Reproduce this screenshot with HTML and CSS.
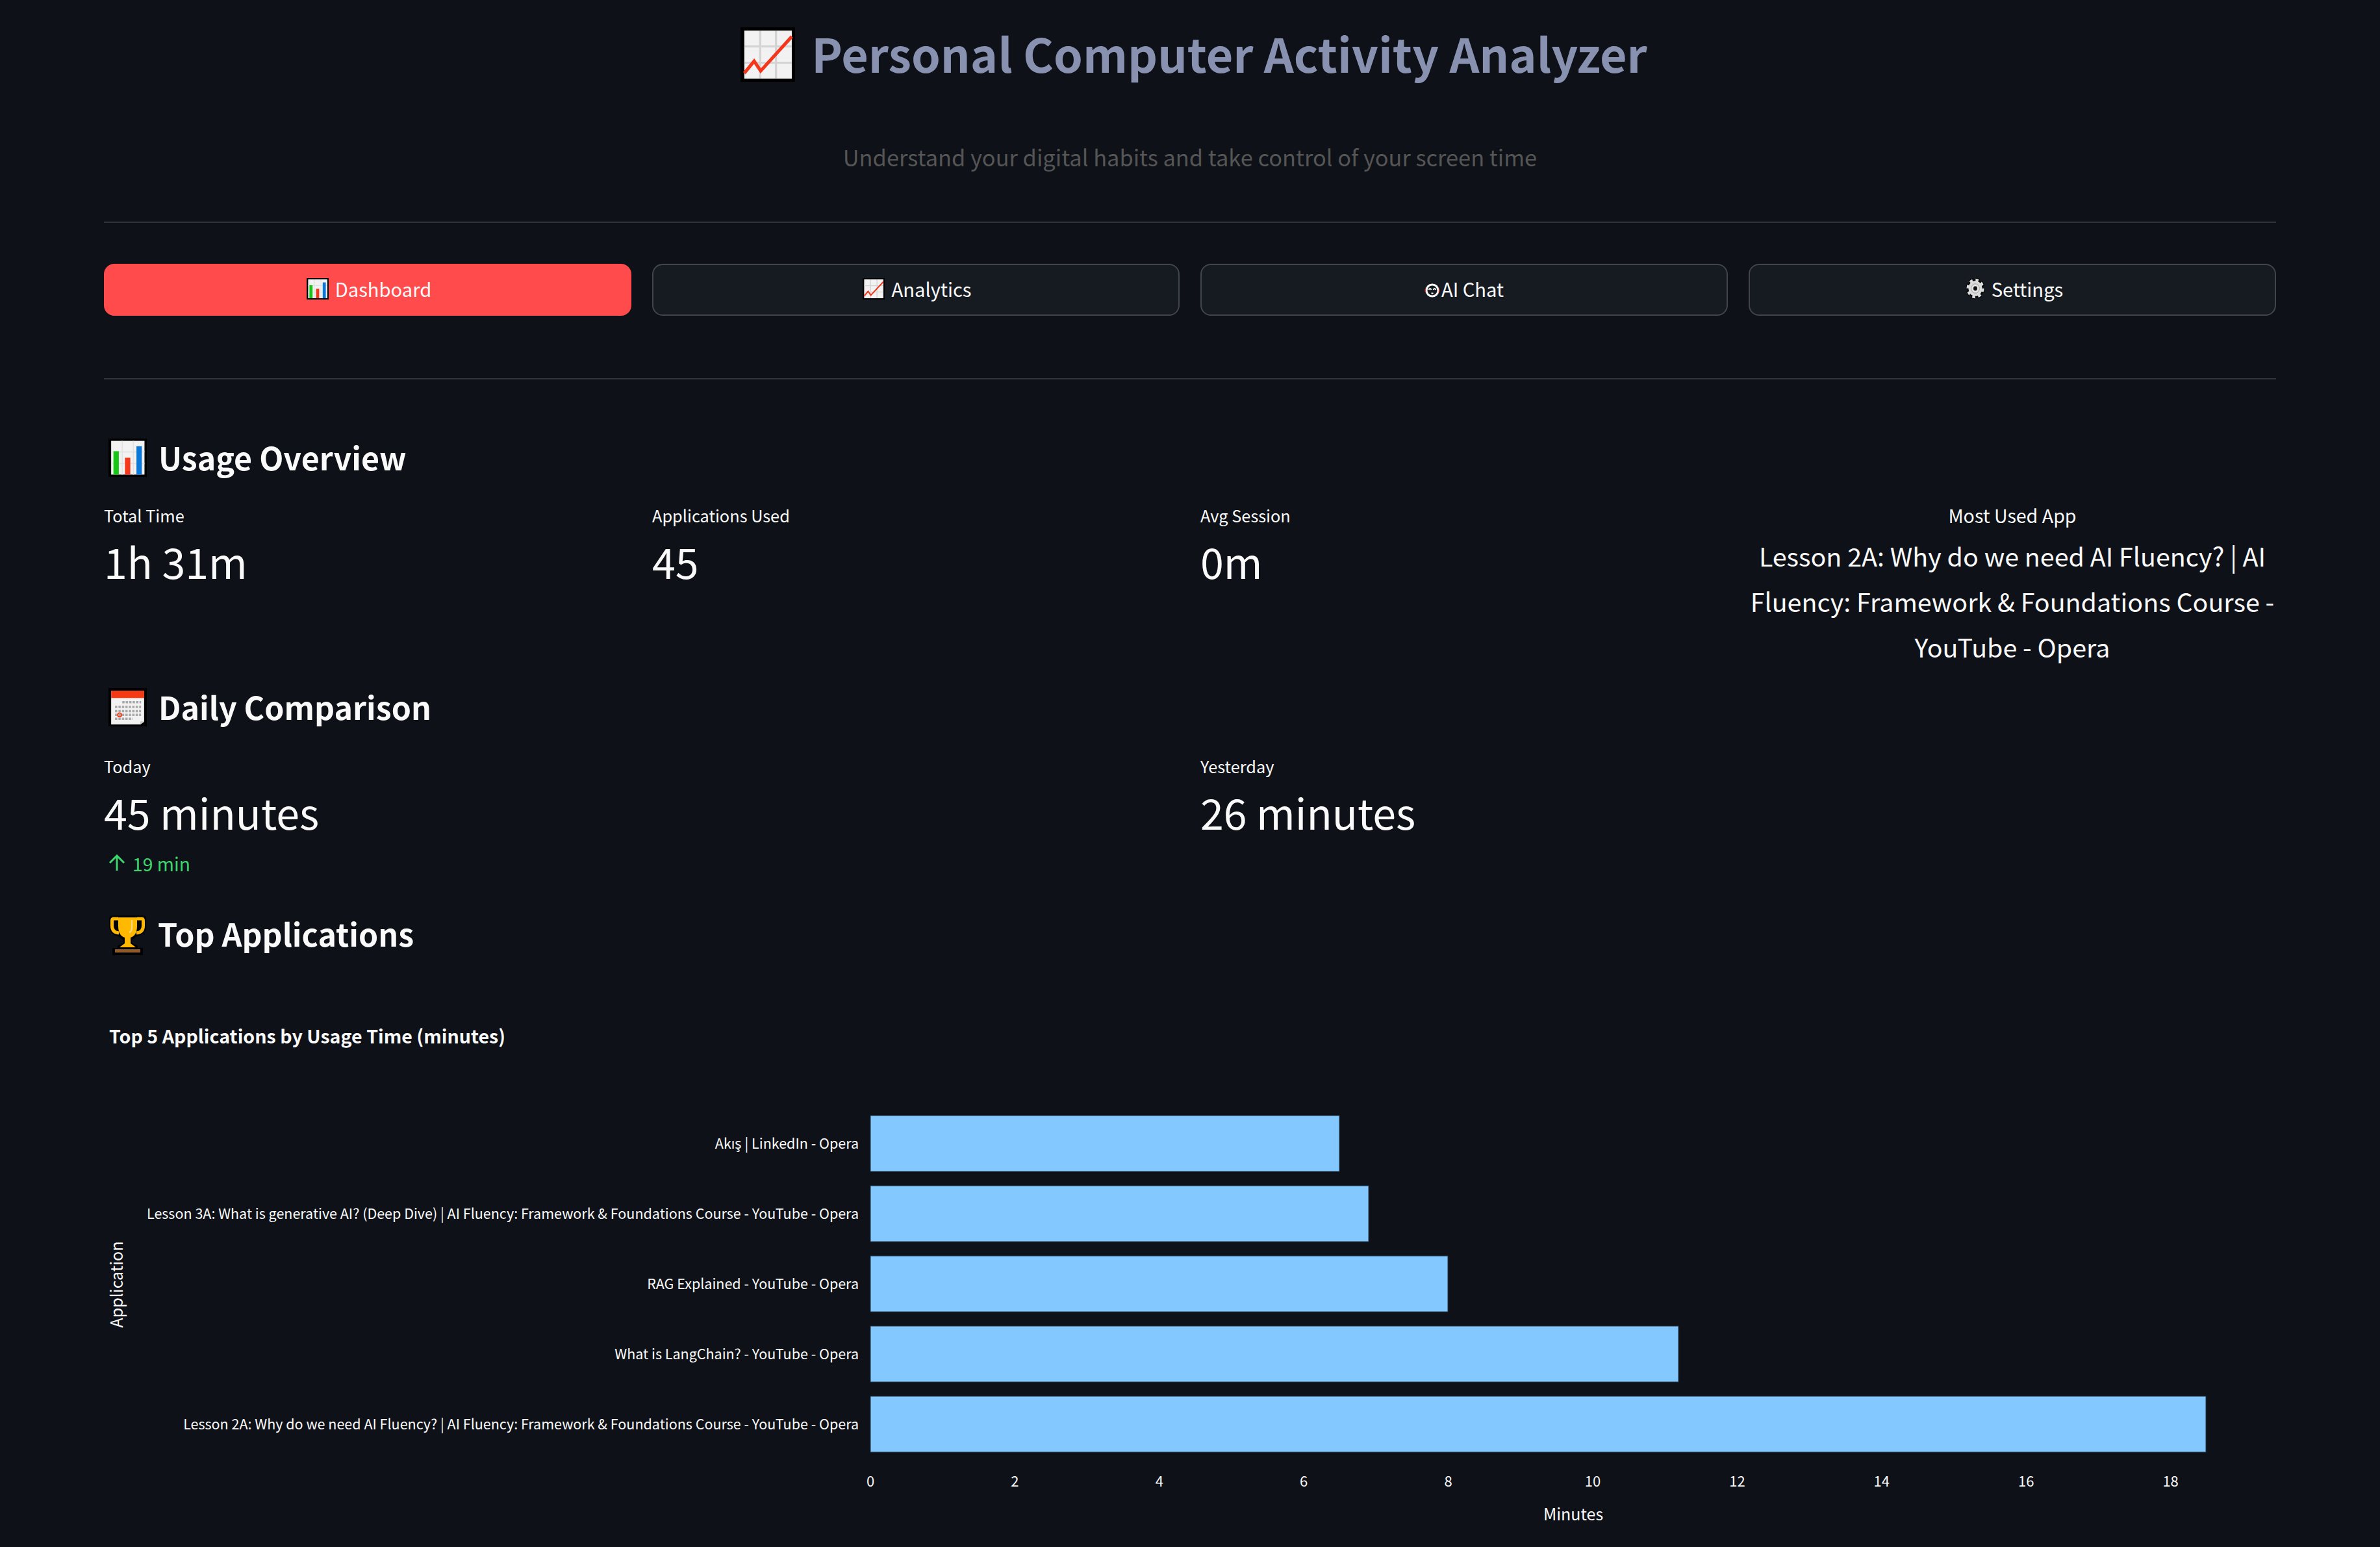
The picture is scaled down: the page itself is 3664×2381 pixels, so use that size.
FILE: index.html
```html
<html>
  <head>
    <title>Personal Computer Activity Analyzer</title>
    <link rel="stylesheet" href="styles.css">
  </head>
  <body>
    <svg class="sprites" width="0" height="0">
      <symbol id="emoji-up" viewBox="0 0 100 100" preserveAspectRatio="none">
        <rect width="100" height="100" fill="#000"/>
        <rect x="7" y="6" width="87" height="88" fill="#f2f2f2"/>
        <path d="M36 6V94M65 6V94M7 35H94M7 65H94" stroke="#d4d4d4" stroke-width="4" fill="none"/>
        <path d="M7 84L25 62L37 80L94 17" stroke="#f4361a" stroke-width="6" fill="none"/>
      </symbol>
      <symbol id="emoji-bars" viewBox="0 0 100 100" preserveAspectRatio="none">
        <rect width="100" height="100" fill="#000"/>
        <rect x="7" y="6" width="87" height="88" fill="#f2f2f2"/>
        <path d="M36 6V94M65 6V94M7 35H94M7 65H94" stroke="#e2e2e2" stroke-width="3" fill="none"/>
        <rect x="13" y="33" width="14" height="61" fill="#17c617"/>
        <rect x="43" y="50" width="14" height="44" fill="#f4361a"/>
        <rect x="73" y="20" width="14" height="74" fill="#0a78d8"/>
      </symbol>
      <symbol id="emoji-calendar" viewBox="0 0 100 100" preserveAspectRatio="none">
        <rect width="100" height="100" fill="#000"/>
        <path d="M7 7H93V88L83 95H7Z" fill="#f2f2f2"/>
        <rect x="7" y="7" width="86" height="19" fill="#f43a14"/>
        <path d="M83 95V87H93Z" fill="#c9c9c9"/>
        <path d="M36 37H85M17 49H85M17 60H85M17 70H85M17 80H63" stroke="#a8a8a8" stroke-width="6" stroke-dasharray="6 3" fill="none"/>
        <circle cx="29" cy="70" r="5" fill="none" stroke="#f43a14" stroke-width="3"/>
      </symbol>
      <symbol id="emoji-trophy" viewBox="0 0 57 63">
        <path d="M4 2H53Q57 2 57 8V18Q57 32 42 34Q38 38 35 40V44L44 49V52H52V63H5V52H13V49L22 44V40Q19 38 15 34Q0 32 0 18V8Q0 2 4 2Z" fill="#000"/>
        <path d="M14 7H7Q4.500 7 4.500 10V18Q4.500 28 15 29M43 7H50Q52.500 7 52.500 10V18Q52.500 28 42 29" stroke="#ffb900" stroke-width="5" fill="none"/>
        <path d="M14 5H43V18Q43 33 33 36V45L41 51H16L24 45V36Q14 33 14 18Z" fill="#ffb900"/>
        <path d="M35 9V20Q35 27 31 28" stroke="#ffd67a" stroke-width="2.5" fill="none"/>
        <rect x="9" y="54" width="39" height="5" fill="#8f5a2c"/>
      </symbol>
      <symbol id="emoji-robot" viewBox="0 0 24 22">
        <circle cx="12" cy="11" r="10.5" fill="#fff"/>
        <circle cx="12" cy="11" r="7.5" fill="#161b22"/>
        <path d="M2 8Q0.5 11 2 14M22 8Q23.5 11 22 14" stroke="#e63b2e" stroke-width="1.5" fill="none"/>
        <path d="M6.5 10Q8.5 6.5 10.500 10M13.500 10Q15.500 6.5 17.500 10" stroke="#fff" stroke-width="1.8" fill="none"/>
        <rect x="10.500" y="14.500" width="3" height="2" fill="#fff"/>
      </symbol>
      <symbol id="emoji-gear" viewBox="0 0 30 34" preserveAspectRatio="none">
        <g transform="translate(15 17) scale(1 1.13)">
          <circle r="12.5" fill="#000"/>
          <circle r="12.5" fill="none" stroke="#000" stroke-width="4" stroke-dasharray="6 3.82"/>
          <circle r="10.5" fill="#dcdcdc"/>
          <circle r="11" fill="none" stroke="#dcdcdc" stroke-width="5" stroke-dasharray="4.3 4.34"/>
          <circle r="7" fill="#b5b5b5"/>
          <circle r="5.7" fill="#e8e8e8"/>
          <circle r="3" fill="#111"/>
        </g>
      </symbol>
    </svg>

    <div class="page">
      <h1 class="app-title">
        <svg class="emoji-title"><use href="#emoji-up"/></svg>
        <span>Personal Computer Activity Analyzer</span>
      </h1>
      <p class="app-subtitle">Understand your digital habits and take control of your screen time</p>
      <hr class="rule rule-top">

      <nav class="tabs">
        <button class="tab tab-active"><svg class="emoji-tab"><use href="#emoji-bars"/></svg>Dashboard</button>
        <button class="tab"><svg class="emoji-tab"><use href="#emoji-up"/></svg>Analytics</button>
        <button class="tab tab-tight"><svg class="emoji-robot"><use href="#emoji-robot"/></svg>AI Chat</button>
        <button class="tab"><svg class="emoji-gear"><use href="#emoji-gear"/></svg>Settings</button>
      </nav>
      <hr class="rule rule-bottom">

      <h2 class="section-head head-usage">
        <svg class="emoji-head"><use href="#emoji-bars"/></svg>Usage Overview
      </h2>
      <div class="metrics metrics-four">
        <div class="metric">
          <div class="metric-label">Total Time</div>
          <div class="metric-value">1h 31m</div>
        </div>
        <div class="metric">
          <div class="metric-label">Applications Used</div>
          <div class="metric-value">45</div>
        </div>
        <div class="metric">
          <div class="metric-label">Avg Session</div>
          <div class="metric-value">0m</div>
        </div>
        <div class="metric metric-center">
          <div class="metric-label">Most Used App</div>
          <div class="metric-long">Lesson 2A: Why do we need AI Fluency? | AI Fluency: Framework &amp; Foundations Course - YouTube - Opera</div>
        </div>
      </div>

      <h2 class="section-head head-daily">
        <svg class="emoji-head"><use href="#emoji-calendar"/></svg>Daily Comparison
      </h2>
      <div class="metrics metrics-two">
        <div class="metric">
          <div class="metric-label">Today</div>
          <div class="metric-value">45 minutes</div>
          <div class="metric-delta">
            <svg class="delta-arrow" viewBox="0 0 26 26"><path d="M13 25V2M2 13L13 2L24 13" fill="none" stroke="#3dd56d" stroke-width="3"/></svg>
            19 min
          </div>
        </div>
        <div class="metric">
          <div class="metric-label">Yesterday</div>
          <div class="metric-value">26 minutes</div>
        </div>
      </div>

      <h2 class="section-head head-top">
        <svg class="emoji-trophy"><use href="#emoji-trophy"/></svg>Top Applications
      </h2>

      <svg class="chart" viewBox="0 0 3344 821">
        <text class="chart-title" x="8" y="46">Top 5 Applications by Usage Time (minutes)</text>
        <text class="axis-title" transform="translate(29 417) rotate(-90)" text-anchor="middle">Application</text>

        <g class="bars">
          <rect x="1180" y="157" width="722" height="86"/>
          <rect x="1180" y="265" width="767" height="86"/>
          <rect x="1180" y="373" width="889" height="86"/>
          <rect x="1180" y="481" width="1244" height="86"/>
          <rect x="1180" y="589" width="2056" height="86"/>
        </g>

        <g class="cat-labels" text-anchor="end">
          <text x="1162" y="208">Akış | LinkedIn - Opera</text>
          <text x="1162" y="316">Lesson 3A: What is generative AI? (Deep Dive) | AI Fluency: Framework &amp; Foundations Course - YouTube - Opera</text>
          <text x="1162" y="424">RAG Explained - YouTube - Opera</text>
          <text x="1162" y="532">What is LangChain? - YouTube - Opera</text>
          <text x="1162" y="640">Lesson 2A: Why do we need AI Fluency? | AI Fluency: Framework &amp; Foundations Course - YouTube - Opera</text>
        </g>

        <g class="ticks" text-anchor="middle">
          <text x="1180" y="728">0</text>
          <text x="1402.4" y="728">2</text>
          <text x="1624.8" y="728">4</text>
          <text x="1847.2" y="728">6</text>
          <text x="2069.6" y="728">8</text>
          <text x="2292" y="728">10</text>
          <text x="2514.4" y="728">12</text>
          <text x="2736.8" y="728">14</text>
          <text x="2959.2" y="728">16</text>
          <text x="3181.6" y="728">18</text>
        </g>
        <text class="axis-title" x="2262" y="780" text-anchor="middle">Minutes</text>
      </svg>
    </div>
  </body>
</html>
```

FILE: styles.css
```css
html,
body {
  margin: 0;
  height: 2381px;
  overflow: hidden;
  background: #0e1117;
}

body {
  font-family: "Noto Sans CJK SC", "Noto Sans", sans-serif;
  color: #fafafa;
}

.sprites {
  position: absolute;
}

.page {
  padding: 0 160px;
}

.app-title {
  display: flex;
  justify-content: center;
  align-items: center;
  gap: 25px;
  margin: 42px 0 0;
  height: 84px;
  padding-left: 12px;
  font-size: 71.7px;
  font-weight: 700;
  line-height: 84px;
  color: #8892b0;
}

.app-title span {
  margin-top: -7px;
}

.emoji-title {
  width: 84px;
  height: 84px;
}

.app-subtitle {
  margin: 85px 0 0;
  text-align: center;
  font-size: 34.4px;
  line-height: 60px;
  color: #555555;
}

.rule {
  border: none;
  height: 2px;
  margin: 0;
  background: #30343b;
}

.rule-top {
  margin-top: 70px;
}

.rule-bottom {
  margin-top: 96px;
}

.tabs {
  display: grid;
  grid-template-columns: repeat(4, 1fr);
  gap: 32px;
  margin-top: 63px;
}

.tab {
  display: flex;
  justify-content: center;
  align-items: center;
  gap: 10px;
  height: 80px;
  padding: 0 0 4px 4px;
  border: 2px solid #41444c;
  border-radius: 16px;
  background: #161b22;
  color: #fafafa;
  font-family: inherit;
  font-size: 29.2px;
}

.tab-active {
  background: #ff4b4b;
  border-color: #ff4b4b;
}

.tab-tight {
  gap: 2px;
  padding-left: 0;
}

.emoji-tab {
  width: 34px;
  height: 33px;
}

.emoji-robot {
  width: 24px;
  height: 22px;
  margin-top: 6px;
}

.emoji-gear {
  width: 30px;
  height: 34px;
  margin-left: 2px;
}

.section-head {
  display: flex;
  align-items: center;
  gap: 18px;
  margin: 0;
  padding-left: 7px;
  height: 60px;
  font-size: 48.3px;
  font-weight: 600;
  line-height: 60px;
}

.head-usage {
  margin-top: 89px;
}

.head-daily {
  margin-top: 27px;
}

.head-top {
  margin-top: 58px;
}

.emoji-head {
  width: 59px;
  height: 59px;
  margin-top: 2px;
}

.emoji-trophy {
  width: 57px;
  height: 63px;
  margin: 5px 0 0 1px;
}

.metrics {
  display: grid;
  gap: 32px;
}

.metrics-four {
  grid-template-columns: repeat(4, 1fr);
  margin-top: 40px;
}

.metrics-two {
  grid-template-columns: repeat(2, 1fr);
  margin-top: 42px;
}

.metric-label {
  font-size: 25.3px;
  line-height: 40px;
}

.metric-value {
  margin-top: 10px;
  font-size: 64.5px;
  line-height: 80px;
}

.metric-center {
  text-align: center;
}

.metric-center .metric-label {
  font-size: 28.6px;
}

.metric-long {
  margin-top: 7px;
  font-size: 39.4px;
  line-height: 70px;
}

.metric-delta {
  display: flex;
  align-items: center;
  gap: 11px;
  margin-top: 19px;
  padding-left: 7px;
  height: 40px;
  font-size: 28.3px;
  color: #3dd56d;
}

.delta-arrow {
  width: 26px;
  height: 26px;
}

.chart {
  display: block;
  width: 3344px;
  height: 821px;
  margin-top: 94px;
}

.chart text {
  fill: #fafafa;
}

.chart-title {
  font-size: 28.6px;
  font-weight: 700;
}

.axis-title {
  font-size: 25px;
}

.bars rect {
  fill: #83c9ff;
  stroke: #24384d;
  stroke-width: 1px;
}

.cat-labels text {
  font-size: 21.5px;
}

.ticks text {
  font-size: 22px;
}
```
